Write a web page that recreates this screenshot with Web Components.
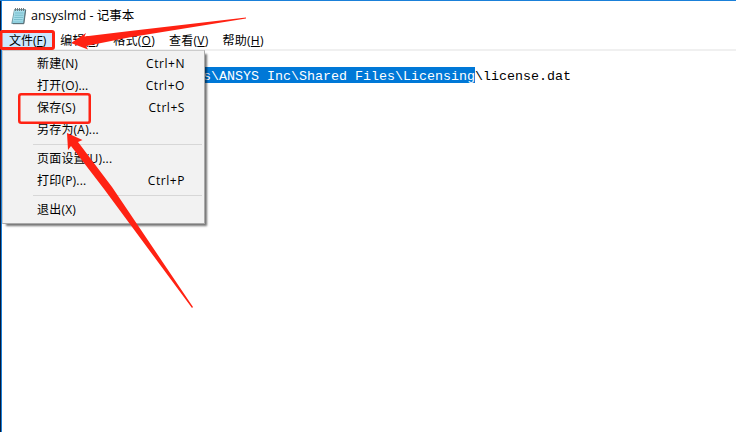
<!DOCTYPE html>
<html lang="zh-CN">
<head>
<meta charset="utf-8">
<title>ansyslmd - 记事本</title>
<style>
  html, body { margin: 0; height: 100%; overflow: hidden; }
  body {
    position: relative;
    color: #000;
    font: 12px/22px "Open Sans", "Noto Sans CJK SC", sans-serif;
  }
</style>
</head>
<body>
<np-window title-text="ansyslmd - 记事本">
  <np-menubar slot="menubar">
    <np-menu-title label="文件" key="F" active></np-menu-title>
    <np-menu-title label="编辑" key="E"></np-menu-title>
    <np-menu-title label="格式" key="O"></np-menu-title>
    <np-menu-title label="查看" key="V"></np-menu-title>
    <np-menu-title label="帮助" key="H"></np-menu-title>
  </np-menubar>
  <np-editor selected="s\ANSYS Inc\Shared Files\Licensing">\license.dat</np-editor>
</np-window>
<np-menu>
  <np-menu-item keys="Ctrl+N">新建(N)</np-menu-item>
  <np-menu-item keys="Ctrl+O">打开(O)...</np-menu-item>
  <np-menu-item keys="Ctrl+S">保存(S)</np-menu-item>
  <np-menu-item>另存为(A)...</np-menu-item>
  <np-separator></np-separator>
  <np-menu-item>页面设置(U)...</np-menu-item>
  <np-menu-item keys="Ctrl+P">打印(P)...</np-menu-item>
  <np-separator></np-separator>
  <np-menu-item>退出(X)</np-menu-item>
</np-menu>
<np-annotations></np-annotations>

<script>
class NpElement extends HTMLElement {
  constructor() {
    super();
    this.attachShadow({ mode: "open" });
  }

  connectedCallback() {
    this.shadowRoot.innerHTML = this.render();
  }
}

class NpWindow extends NpElement {
  render() {
    return /*html*/ `
      <style>
        :host {
          display: flex;
          flex-direction: column;
          box-sizing: border-box;
          height: 100%;
          border-top: 1px solid #1a80d9;
          background: linear-gradient(90deg, #061a3a 1px, #1a80d9 1px, #1a80d9 2px, #fff 2px);
          padding-left: 2px;
        }
        header {
          display: flex;
          align-items: center;
          height: 30px;
          padding-left: 9px;
          gap: 4px;
        }
        svg { display: block; }
        .title { font-size: 12.5px; white-space: pre; }
      </style>
      <header>
        <svg width="16" height="18" viewBox="0 0 16 18">
          <path d="M3.5 2.5H14.5L12.5 16.5H.8Z" fill="#8fd0df" stroke="#5d8792" stroke-width=".8"/>
          <path d="M3.5 3.5H13.5L11.8 14H2Z" fill="#a7deea"/>
          <path d="M4 6H12.6M3.7 8.2H12.3M3.3 10.4H12M3 12.6H11.6" stroke="#62adbf" stroke-width=".7"/>
          <path d="M4.5 1V4M6.5 1V4M8.5 1V4M10.5 1V4M12.5 1V4" stroke="#686f72" stroke-width=".9"/>
          <path d="M14.7 3L12.9 16.7H2" fill="none" stroke="#52676d" stroke-width=".9"/>
        </svg>
        <span class="title">${this.getAttribute("title-text")}</span>
      </header>
      <slot name="menubar"></slot>
      <slot></slot>
    `;
  }
}

class NpMenubar extends NpElement {
  render() {
    return /*html*/ `
      <style>
        :host {
          display: flex;
          height: 18px;
          border-bottom: 2px solid #f0f0f0;
        }
      </style>
      <slot></slot>
    `;
  }
}

class NpMenuTitle extends NpElement {
  render() {
    return /*html*/ `
      <style>
        :host {
          display: block;
          padding: 0 7px;
          line-height: 19px;
          letter-spacing: .25px;
          white-space: nowrap;
        }
        :host([active]) { background: #cce8ff; letter-spacing: 0; }
        u { text-underline-offset: 1px; }
      </style>
      ${this.getAttribute("label")}(<u>${this.getAttribute("key")}</u>)
    `;
  }
}

class NpEditor extends NpElement {
  render() {
    return /*html*/ `
      <style>
        :host {
          display: block;
          padding: 16px 0 0 201px;
          font: 13.33px/19px "Liberation Mono", monospace;
        }
        .line { display: flex; height: 16px; white-space: pre; }
        .sel { background: #0078d7; color: #fff; }
      </style>
      <div class="line"><span class="sel">${this.getAttribute("selected")}</span><slot></slot></div>
    `;
  }
}

class NpMenu extends NpElement {
  render() {
    return /*html*/ `
      <style>
        :host {
          position: absolute;
          left: 2px;
          top: 50px;
          display: flex;
          flex-direction: column;
          box-sizing: border-box;
          width: 203px;
          height: 174px;
          padding: 2px;
          border: 1px solid #ccc;
          border-right-color: #aaa;
          border-bottom-color: #aaa;
          background: #f2f2f2;
          box-shadow: 3px 3px 2px -1px rgba(0, 0, 0, .55);
        }
      </style>
      <slot></slot>
    `;
  }
}

class NpMenuItem extends NpElement {
  render() {
    return /*html*/ `
      <style>
        :host {
          display: flex;
          justify-content: space-between;
          height: 22px;
          padding: 0 17px 0 32px;
          letter-spacing: .2px;
          white-space: nowrap;
        }
        .keys { letter-spacing: .55px; }
      </style>
      <span><slot></slot></span>
      <span class="keys">${this.getAttribute("keys") || ""}</span>
    `;
  }
}

class NpSeparator extends NpElement {
  render() {
    return /*html*/ `
      <style>
        :host {
          display: block;
          height: 1px;
          margin: 3px 0 3px 28px;
          background: #d7d7d7;
        }
      </style>
    `;
  }
}

// Red boxes and arrows drawn over the window
class NpAnnotations extends NpElement {
  render() {
    return /*html*/ `
      <style>
        :host { position: absolute; inset: 0; pointer-events: none; }
        svg { display: block; }
      </style>
      <svg width="736" height="432" viewBox="0 0 736 432">
        <g fill="none" stroke="#ff2213">
          <rect x="1" y="31.5" width="52.5" height="17" rx="1.5" stroke-width="3"/>
          <rect x="19.25" y="94.25" width="70.5" height="28.5" rx="2" stroke-width="2.5"/>
        </g>
        <g fill="#ff2213">
          <path d="M71 43L86 33L84.5 36.5L130 31L246 17.5V18.5L130 37.3L86 46L88 49.5Z"/>
          <path d="M67 133L82.5 140L78 142L112 187L193 307L192 308L104 189L71 146L68 150Z"/>
        </g>
      </svg>
    `;
  }
}

customElements.define("np-window", NpWindow);
customElements.define("np-menubar", NpMenubar);
customElements.define("np-menu-title", NpMenuTitle);
customElements.define("np-editor", NpEditor);
customElements.define("np-menu", NpMenu);
customElements.define("np-menu-item", NpMenuItem);
customElements.define("np-separator", NpSeparator);
customElements.define("np-annotations", NpAnnotations);
</script>
</body>
</html>
